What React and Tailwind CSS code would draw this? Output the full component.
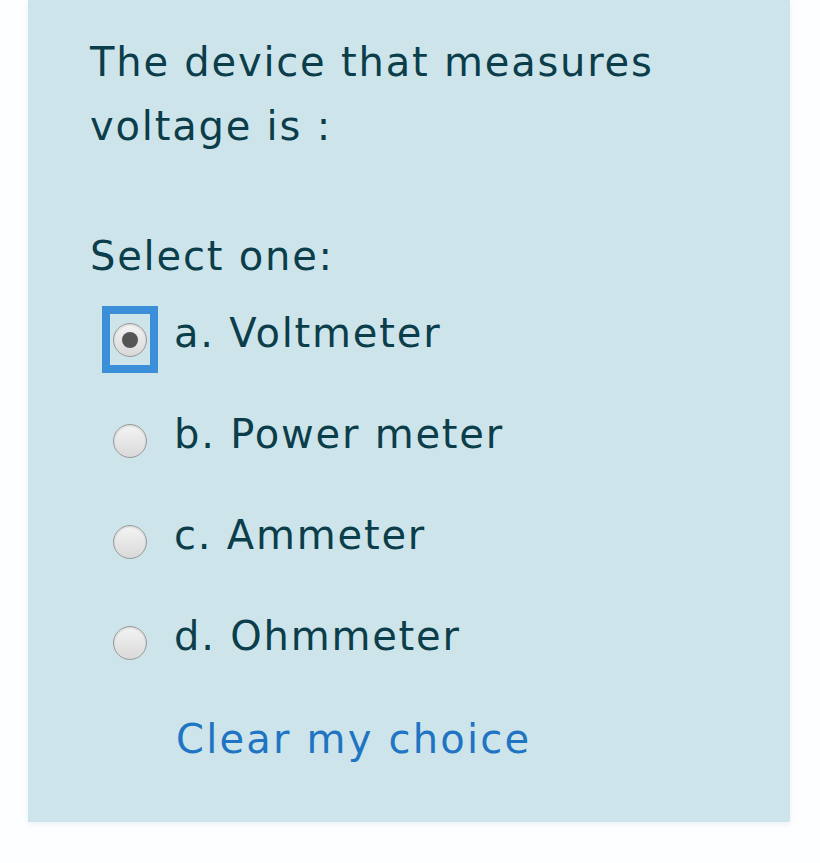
import React, { useState } from 'react';

const options = [
    { key: 'a', label: 'a. Voltmeter' },
    { key: 'b', label: 'b. Power meter' },
    { key: 'c', label: 'c. Ammeter' },
    { key: 'd', label: 'd. Ohmmeter' },
];

function Radio({ checked }) {
    return (
        <span className="w-[34px] h-[34px] rounded-full border border-[#9a9a9a] bg-gradient-to-b from-[#f4f4f4] to-[#d9d9d9] flex items-center justify-center shadow-[inset_0_1px_2px_rgba(0,0,0,0.15)]">
            {checked && <span className="w-[16px] h-[16px] rounded-full bg-[#555]" />}
        </span>
    );
}

export default function App() {
    const [selected, setSelected] = useState('a');

    return (
        <div className="min-h-screen bg-[#fdfeff]" style={{ fontFamily: '"DejaVu Sans", sans-serif' }}>
            <div className="ml-[28px] w-[762px] h-[822px] bg-[#cde5ea] pl-[62px] pt-[30px] text-[#0b3e4a] text-[40px] tracking-[1.8px] shadow-[0_2px_6px_rgba(180,200,210,0.25)]">
                <p className="leading-[64px]">
                    The device that measures<br />voltage is :
                </p>
                <p className="leading-[64px] mt-[66px]">Select one:</p>
                <div className="mt-[1px] flex flex-col">
                    {options.map((o) => (
                        <div
                            key={o.key}
                            onClick={() => setSelected(o.key)}
                            className="flex items-center h-[101px] cursor-pointer"
                        >
                            <span
                                className={
                                    selected === o.key
                                        ? 'ml-[12px] w-[56px] h-[67px] border-[8px] border-[#3b8fd9] flex items-center justify-center'
                                        : 'ml-[12px] w-[56px] h-[67px] border-[8px] border-transparent flex items-center justify-center'
                                }
                            >
                                <Radio checked={selected === o.key} />
                            </span>
                            <span className="ml-[16px] leading-[48px] -mt-[14px]">{o.label}</span>
                        </div>
                    ))}
                </div>
                <button
                    onClick={() => setSelected(null)}
                    className="ml-[86px] mt-[14px] leading-[64px] tracking-[2.2px] text-[#1f74c3]"
                >
                    Clear my choice
                </button>
            </div>
        </div>
    );
}
